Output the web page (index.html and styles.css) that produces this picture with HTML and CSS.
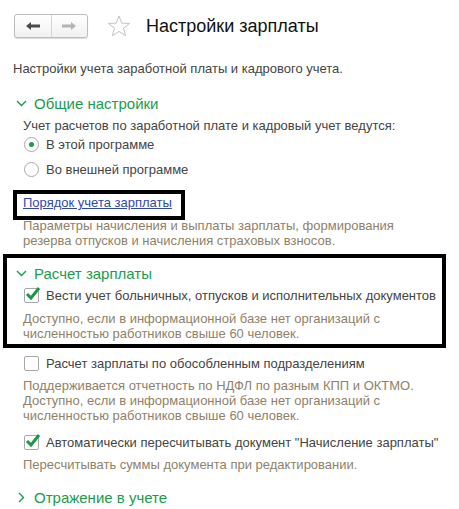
FILE: index.html
```html
<!DOCTYPE html>
<html lang="ru">

<head>
    <meta charset="UTF-8">
    <title>Настройки зарплаты</title>
    <link rel="stylesheet" href="styles.css">
</head>

<body>
    <div class="header">
        <div class="nav">
            <span class="nav-btn">
                <svg width="14" height="8" viewBox="0 0 14 8"><path d="M0 4 L5 0 L5 2.5 L14 2.5 L14 5.5 L5 5.5 L5 8 Z" fill="#4a4a4a"/></svg>
            </span>
            <span class="nav-btn">
                <svg width="14" height="8" viewBox="0 0 14 8"><path d="M14 4 L9 0 L9 2.5 L0 2.5 L0 5.5 L9 5.5 L9 8 Z" fill="#b4b4b4"/></svg>
            </span>
        </div>
        <svg class="star" width="24" height="22" viewBox="0 0 24 22">
            <path d="M12 1 L14.8 8.2 L22.6 8.4 L16.5 13.2 L18.7 20.8 L12 16.4 L5.3 20.8 L7.5 13.2 L1.4 8.4 L9.2 8.2 Z" fill="none" stroke="#c4c4c4" stroke-width="1"/>
        </svg>
        <div class="title">Настройки зарплаты</div>
    </div>

    <p class="intro">Настройки учета заработной платы и кадрового учета.</p>

    <!-- Общие настройки -->
    <div class="group-title first">
        <svg class="chev" width="11" height="7" viewBox="0 0 11 7"><path d="M1 1 L5.5 5.5 L10 1" fill="none" stroke="#1a9c4a" stroke-width="1.4"/></svg>
        <span>Общие настройки</span>
    </div>
    <p class="field-label">Учет расчетов по заработной плате и кадровый учет ведутся:</p>
    <label class="option">
        <span class="radio checked"></span>
        <span>В этой программе</span>
    </label>
    <label class="option second">
        <span class="radio"></span>
        <span>Во внешней программе</span>
    </label>
    <div class="link-box">
        <a href="#" class="link">Порядок учета зарплаты</a>
    </div>
    <p class="hint link-hint">Параметры начисления и выплаты зарплаты, формирования<br>резерва отпусков и начисления страховых взносов.</p>

    <!-- Расчет зарплаты -->
    <div class="highlight">
        <div class="group-title">
            <svg class="chev" width="11" height="7" viewBox="0 0 11 7"><path d="M1 1 L5.5 5.5 L10 1" fill="none" stroke="#1a9c4a" stroke-width="1.4"/></svg>
            <span>Расчет зарплаты</span>
        </div>
        <label class="option">
            <span class="checkbox">
                <svg width="16" height="14" viewBox="0 0 16 14"><path d="M2 7 L6 11 L14 1" fill="none" stroke="#1b9a45" stroke-width="3"/></svg>
            </span>
            <span>Вести учет больничных, отпусков и исполнительных документов</span>
        </label>
        <p class="hint">Доступно, если в информационной базе нет организаций с<br>численностью работников свыше 60 человек.</p>
    </div>

    <label class="option cb2">
        <span class="checkbox"></span>
        <span>Расчет зарплаты по обособленным подразделениям</span>
    </label>
    <p class="hint">Поддерживается отчетность по НДФЛ по разным КПП и ОКТМО.<br>Доступно, если в информационной базе нет организаций с<br>численностью работников свыше 60 человек.</p>

    <label class="option cb3">
        <span class="checkbox">
            <svg width="16" height="14" viewBox="0 0 16 14"><path d="M2 7 L6 11 L14 1" fill="none" stroke="#1b9a45" stroke-width="3"/></svg>
        </span>
        <span>Автоматически пересчитывать документ "Начисление зарплаты"</span>
    </label>
    <p class="hint">Пересчитывать суммы документа при редактировании.</p>

    <!-- Отражение в учете -->
    <div class="group-title last">
        <svg class="chev right" width="7" height="11" viewBox="0 0 7 11"><path d="M1 1 L5.5 5.5 L1 10" fill="none" stroke="#1a9c4a" stroke-width="1.4"/></svg>
        <span>Отражение в учете</span>
    </div>
</body>

</html>
```

FILE: styles.css
```css
body {
    font-family: "Liberation Sans", Arial, sans-serif;
    font-size: 13px;
    line-height: 17px;
    color: #444444;
    background-color: #ffffff;
    margin: 0;
    padding: 0;
}

p {
    margin: 0;
}

.header {
    display: flex;
    align-items: center;
    padding: 14px 0 0 14px;
    height: 24px;
}

.nav {
    display: flex;
    width: 72px;
    height: 22px;
    border: 1px solid #bcbcbc;
    border-radius: 3px;
    background: linear-gradient(#ffffff, #f1f1f1);
    box-shadow: 0 1px 1px rgba(0, 0, 0, 0.15);
}

.nav-btn {
    flex: 1;
    display: flex;
    align-items: center;
    justify-content: center;
}

.nav-btn + .nav-btn {
    border-left: 1px solid #d4d4d4;
}

.star {
    margin-left: 19px;
}

.title {
    margin-left: 15px;
    font-size: 18px;
    line-height: 24px;
    color: #111111;
}

.intro {
    margin-top: 22px;
    padding-left: 13px;
}

.group-title {
    display: flex;
    align-items: center;
    height: 20px;
    padding-left: 16px;
    font-size: 15px;
    color: #1a9c4a;
}

.group-title .chev {
    margin-right: 7px;
}

.group-title .chev.right {
    margin-left: 2px;
    margin-right: 9px;
}

.group-title.first {
    margin-top: 16px;
}

.group-title.last {
    margin-top: 15px;
}

.field-label {
    margin-top: 4px;
    padding-left: 23px;
}

.option {
    display: flex;
    align-items: center;
    height: 20px;
    padding-left: 24px;
}

.option.second {
    margin-top: 5px;
}

.radio {
    width: 13px;
    height: 13px;
    border: 1px solid #a8a8a8;
    border-radius: 50%;
    margin-right: 7px;
    display: flex;
    align-items: center;
    justify-content: center;
    background: #ffffff;
}

.radio.checked::after {
    content: "";
    width: 5px;
    height: 5px;
    border-radius: 50%;
    background: #1a9c4a;
}

.checkbox {
    position: relative;
    width: 13px;
    height: 13px;
    border: 1px solid #a8a8a8;
    border-radius: 2px;
    margin-right: 7px;
    background: #ffffff;
}

.checkbox svg {
    position: absolute;
    left: 0;
    top: -2px;
}

.link-box {
    width: fit-content;
    margin: 11px 0 0 13px;
    padding: 0 9px 5px 6px;
    border: 4px solid #000000;
}

.link {
    color: #2f47b3;
    text-decoration: underline;
}

.hint {
    padding-left: 23px;
    line-height: 15px;
    color: #8f8169;
    margin-top: 5px;
}

.hint.link-hint {
    margin-top: -2px;
}

.highlight {
    margin: 6px 13px 0 3px;
    padding: 5px 0 3px 0;
    border: 4px solid #000000;
}

.highlight .group-title {
    padding-left: 9px;
}

.highlight .option {
    margin-top: 2px;
    padding-left: 17px;
}

.highlight .hint {
    padding-left: 16px;
    margin-top: 6px;
}

.option.cb2 {
    margin-top: 5px;
}

.option.cb3 {
    margin-top: 9px;
}
```
